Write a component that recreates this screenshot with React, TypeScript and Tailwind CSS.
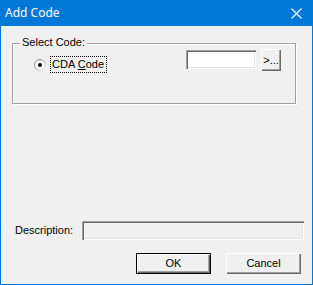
export default function App() {
  return (
    <div className="w-[313px] h-[285px] bg-[#0078d7] flex flex-col px-px pb-px">
      <div className="h-[26px] shrink-0 flex items-center justify-between text-white">
        <span className="pl-[4px] text-[12px] leading-none font-['Noto_Sans',sans-serif]">Add Code</span>
        <svg className="mr-[10px]" width="11" height="11" viewBox="0 0 11 11">
          <path d="M0.5 0.5 L10.5 10.5 M10.5 0.5 L0.5 10.5" stroke="#ffffff" strokeWidth="1.1" />
        </svg>
      </div>
      <div className="flex-1 bg-[#f0f0f0] flex flex-col font-['Liberation_Sans',Arial,sans-serif] text-[11px] leading-[13px] text-black">
        <div className="relative ml-[11px] mt-[17px] w-[284px] h-[61px] border border-[#a0a0a0] shadow-[inset_1px_1px_0_#ffffff,1px_1px_0_#ffffff] flex items-start">
          <span className="absolute left-[7px] -top-[8px] px-[2px] bg-[#f0f0f0]">Select Code:</span>
          <div className="ml-[21px] mt-[12px] flex items-center">
            <svg width="12" height="12" viewBox="0 0 12 12">
              <defs>
                <linearGradient id="rg" x1="0" y1="0" x2="1" y2="1">
                  <stop offset="0" stopColor="#808080" />
                  <stop offset="0.5" stopColor="#a0a0a0" />
                  <stop offset="1" stopColor="#ffffff" />
                </linearGradient>
              </defs>
              <circle cx="6" cy="6" r="5.5" fill="#ffffff" stroke="url(#rg)" />
              <circle cx="6" cy="6" r="4.5" fill="none" stroke="#e3e3e3" strokeOpacity="0.6" />
              <circle cx="6" cy="6" r="2" fill="#000000" />
            </svg>
            <span className="ml-[4px] pl-px pr-[2px] h-[17px] flex items-center border border-dotted border-black">
              <span>
                CDA <u className="underline-offset-1">C</u>ode
              </span>
            </span>
          </div>
          <div className="ml-auto mt-[6px] w-[70px] h-[19px] bg-white shadow-[inset_1px_1px_0_#a0a0a0,inset_2px_2px_0_#696969,inset_-1px_-1px_0_#ffffff,inset_-2px_-2px_0_#e3e3e3]" />
          <div className="ml-[5px] mr-[14px] mt-[5px] w-[20px] h-[22px] flex items-center justify-center bg-[#f0f0f0] shadow-[inset_1px_1px_0_#ffffff,inset_-1px_-1px_0_#696969,inset_-2px_-2px_0_#a0a0a0]">
            &gt;...
          </div>
        </div>
        <div className="mt-auto flex items-center">
          <span className="ml-[14px] w-[67px]">Description:</span>
          <div className="w-[222px] h-[19px] bg-[#f0f0f0] shadow-[inset_1px_1px_0_#a0a0a0,inset_2px_2px_0_#696969,inset_-1px_-1px_0_#ffffff,inset_-2px_-2px_0_#e3e3e3]" />
        </div>
        <div className="mt-[13px] mb-[10px] flex justify-end gap-[15px] mr-[11px]">
          <div className="w-[75px] h-[21px] flex items-center justify-center border border-[#000000] shadow-[inset_1px_1px_0_#ffffff,inset_-1px_-1px_0_#696969,inset_-2px_-2px_0_#a0a0a0]">
            OK
          </div>
          <div className="w-[75px] h-[21px] flex items-center justify-center shadow-[inset_1px_1px_0_#ffffff,inset_-1px_-1px_0_#696969,inset_-2px_-2px_0_#a0a0a0]">
            Cancel
          </div>
        </div>
      </div>
    </div>
  );
}
